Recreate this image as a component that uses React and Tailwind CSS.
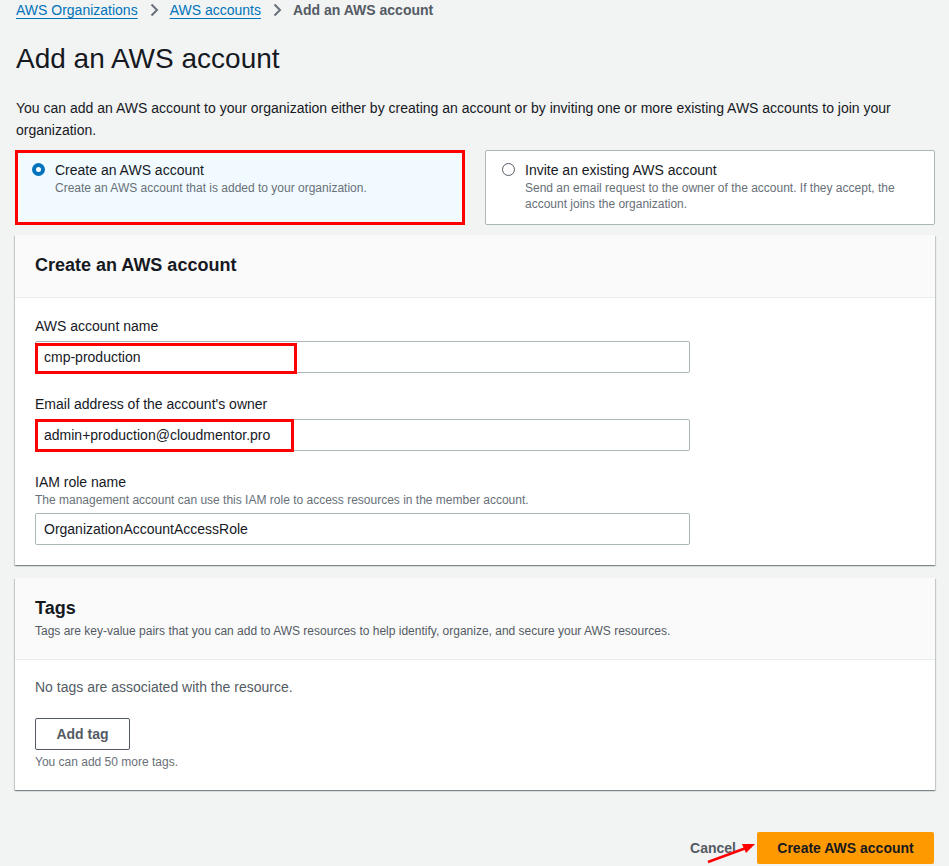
import React from "react";

function Chevron() {
  return (
    <svg width="16" height="16" viewBox="0 0 16 16" className="mx-[8px]" aria-hidden="true">
      <path d="M5.5 2.5 L11 8 L5.5 13.5" fill="none" stroke="#687078" strokeWidth="2" />
    </svg>
  );
}

function Tile({ selected, title, desc }) {
  return (
    <div
      className={
        "relative flex gap-[10px] rounded-[2px] border pl-[16px] pr-[16px] pt-[9px] pb-[12px] " +
        (selected ? "border-[#0073bb] bg-[#f1faff]" : "border-[#aab7b8] bg-white")
      }
    >
      <div className="pt-[3px]">
        {selected ? (
          <span className="block h-[13px] w-[13px] rounded-full border-[4px] border-[#0073bb] bg-white" />
        ) : (
          <span className="block h-[13px] w-[13px] rounded-full border-[1.5px] border-[#545b64] bg-white" />
        )}
      </div>
      <div>
        <div className="text-[14px] leading-[20px] text-[#16191f]">{title}</div>
        <div className="text-[12px] leading-[16px] text-[#687078]">{desc}</div>
      </div>
      {selected && (
        <span className="pointer-events-none absolute -inset-px border-[3px] border-[#ff0000]" />
      )}
    </div>
  );
}

function Input({ value, mark }) {
  return (
    <div className="relative w-[655px]">
      <div className="flex h-[32px] items-center rounded-[2px] border border-[#aab7b8] bg-white pl-[8px] text-[14px] text-[#16191f]">
        {value}
      </div>
      {mark}
    </div>
  );
}

const shadow =
  "shadow-[0_1px_1px_0_rgba(0,28,36,0.3),1px_1px_1px_0_rgba(0,28,36,0.15),-1px_1px_1px_0_rgba(0,28,36,0.15)]";

export default function App() {
  return (
    <div
      className="relative min-h-[866px] bg-[#f2f3f3] pl-[15px] pr-[14px] text-[#16191f]"
      style={{ fontFamily: '"Liberation Sans", Arial, sans-serif' }}
    >
      {/* breadcrumb */}
      <div className="flex h-[20px] items-center pl-[1px] text-[14px] leading-[20px]">
        <a className="text-[#0073bb] underline underline-offset-[3px]">AWS Organizations</a>
        <Chevron />
        <a className="text-[#0073bb] underline underline-offset-[3px]">AWS accounts</a>
        <Chevron />
        <span className="font-bold text-[#545b64]">Add an AWS account</span>
      </div>

      <h1 className="mt-[21px] pl-[1px] text-[28px] leading-[36px] font-normal text-[#16191f]">
        Add an AWS account
      </h1>

      <p className="mt-[20px] pl-[1px] text-[14px] leading-[22px] text-[#16191f]">
        You can add an AWS account to your organization either by creating an account or by inviting one or more existing
        AWS accounts to join your organization.
      </p>

      <div className="mt-[9px] grid grid-cols-2 gap-[20px]">
        <Tile selected title="Create an AWS account" desc="Create an AWS account that is added to your organization." />
        <Tile
          title="Invite an existing AWS account"
          desc="Send an email request to the owner of the account. If they accept, the account joins the organization."
        />
      </div>

      {/* Create container */}
      <div className={"mt-[10px] bg-white " + shadow}>
        <div className="border-b border-[#eaeded] bg-[#fafafa] px-[20px] pt-[19px] pb-[21px]">
          <h2 className="text-[18px] leading-[22px] font-bold">Create an AWS account</h2>
        </div>
        <div className="px-[20px] pt-[18px] pb-[20px]">
          <div className="text-[14px] leading-[20px]">AWS account name</div>
          <div className="mt-[5px]">
            <Input
              value="cmp-production"
              mark={<span className="absolute top-[2px] left-0 h-[31px] w-[262px] border-[3px] border-[#ff0000]" />}
            />
          </div>

          <div className="mt-[21px] text-[14px] leading-[20px]">Email address of the account's owner</div>
          <div className="mt-[5px]">
            <Input
              value="admin+production@cloudmentor.pro"
              mark={<span className="absolute top-0 left-0 h-[33px] w-[259px] border-[3px] border-[#ff0000]" />}
            />
          </div>

          <div className="mt-[21px] text-[14px] leading-[20px]">IAM role name</div>
          <div className="text-[12px] leading-[16px] text-[#687078]">
            The management account can use this IAM role to access resources in the member account.
          </div>
          <div className="mt-[5px]">
            <Input value="OrganizationAccountAccessRole" />
          </div>
        </div>
      </div>

      {/* Tags container */}
      <div className={"mt-[13px] bg-white " + shadow}>
        <div className="border-b border-[#eaeded] bg-[#fafafa] px-[20px] pt-[19px] pb-[20px]">
          <h2 className="text-[18px] leading-[22px] font-bold">Tags</h2>
          <div className="mt-[4px] text-[12px] leading-[16px] text-[#545b64]">
            Tags are key-value pairs that you can add to AWS resources to help identify, organize, and secure your AWS
            resources.
          </div>
        </div>
        <div className="px-[20px] pt-[17px] pb-[20px]">
          <div className="text-[14px] leading-[20px] text-[#545b64]">No tags are associated with the resource.</div>
          <button className="mt-[21px] flex h-[32px] w-[95px] items-center justify-center rounded-[2px] border border-[#545b64] bg-white text-[14px] font-bold text-[#545b64]">
            Add tag
          </button>
          <div className="mt-[4px] text-[12px] leading-[16px] text-[#687078]">You can add 50 more tags.</div>
        </div>
      </div>

      {/* footer */}
      <div className="mt-[42px] flex items-center justify-end gap-[21px] pr-[1px]">
        <span className="text-[14px] font-bold text-[#545b64]">Cancel</span>
        <button className="flex h-[32px] w-[177px] items-center justify-center rounded-[2px] bg-[#ff9900] text-[14px] font-bold text-[#16191f]">
          Create AWS account
        </button>
      </div>

      {/* annotation arrow */}
      <svg
        className="pointer-events-none absolute left-[700px] top-[834px]"
        width="60"
        height="32"
        viewBox="0 0 60 32"
        aria-hidden="true"
      >
        <line x1="8" y1="28" x2="46" y2="14" stroke="#ff0000" strokeWidth="2.5" />
        <polygon points="55,10 42,10 46,19" fill="#ff0000" />
      </svg>
    </div>
  );
}
